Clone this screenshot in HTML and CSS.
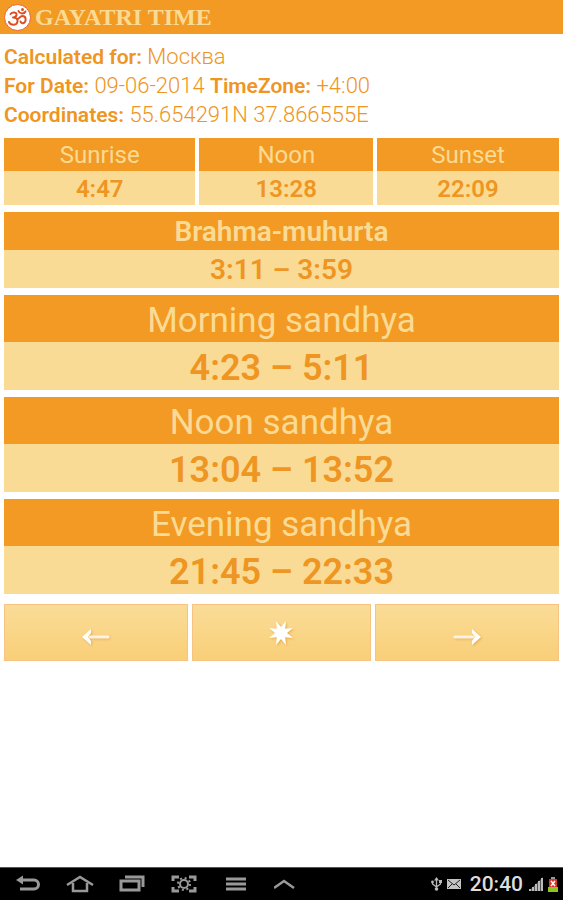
FILE: index.html
```html
<!DOCTYPE html>
<html lang="en">
<head>
    <meta charset="UTF-8">
    <meta name="viewport" content="width=device-width, initial-scale=1.0">
    <title>Gayatri Time</title>
    <link rel="stylesheet" href="styles.css">
</head>
<body>
    <header class="header">
        <svg class="logo" viewBox="0 0 54 54" aria-hidden="true">
            <circle cx="27" cy="27" r="26" fill="#fff" stroke="#e8622a" stroke-width="2"/>
            <g fill="none" stroke="#dc4f24" stroke-width="4" stroke-linecap="round" stroke-linejoin="round">
                <path d="M13 20c4-5 13-4 12 2-1 4-4 5-7 5 6 0 10 3 9 8-1 8-13 9-17 1"/>
                <path d="M26 30c5 1 5-6 11-6 7 0 8 9 4 13-3 3-7 1-8-2"/>
                <path d="M29 14c2 6 11 7 14 1"/>
            </g>
            <circle cx="37" cy="11" r="3" fill="#dc4f24"/>
        </svg>
        <h1>GAYATRI TIME</h1>
    </header>

    <main class="content">
        <div class="info">
            <p><strong>Calculated for:</strong> Москва</p>
            <p><strong>For Date:</strong> 09-06-2014 <strong>TimeZone:</strong> +4:00</p>
            <p><strong>Coordinates:</strong> 55.654291N 37.866555E</p>
        </div>

        <table class="sun-table">
            <thead>
                <tr>
                    <th scope="col">Sunrise</th>
                    <th scope="col">Noon</th>
                    <th scope="col">Sunset</th>
                </tr>
            </thead>
            <tbody>
                <tr>
                    <td>4:47</td>
                    <td>13:28</td>
                    <td>22:09</td>
                </tr>
            </tbody>
        </table>

        <section class="period period-small">
            <h2>Brahma-muhurta</h2>
            <p>3:11 – 3:59</p>
        </section>
        <section class="period">
            <h2>Morning sandhya</h2>
            <p>4:23 – 5:11</p>
        </section>
        <section class="period">
            <h2>Noon sandhya</h2>
            <p>13:04 – 13:52</p>
        </section>
        <section class="period">
            <h2>Evening sandhya</h2>
            <p>21:45 – 22:33</p>
        </section>

        <div class="day-buttons">
            <button type="button" aria-label="Previous day">
                <svg class="arrow" viewBox="0 0 28 18" aria-hidden="true">
                    <path d="M8 9h18" stroke="#fff" stroke-opacity="0.8" stroke-width="3" stroke-linecap="round"/>
                    <path d="M0 9L9 1v4L6 9l3 4v4z" fill="#fff"/>
                </svg>
            </button>
            <button type="button" aria-label="Today">
                <svg class="star" viewBox="0 0 28 28" aria-hidden="true">
                    <path d="M19 2l-.8 7.800L26 9l-6 5 6 5-7.800-.8L19 26l-5-6-5 6 .8-7.800L2 19l6-5-6-5 7.800.8L9 2l5 6z" fill="#fff"/>
                </svg>
            </button>
            <button type="button" aria-label="Next day">
                <svg class="arrow" viewBox="0 0 28 18" aria-hidden="true">
                    <path d="M2 9h18" stroke="#fff" stroke-opacity="0.8" stroke-width="3" stroke-linecap="round"/>
                    <path d="M28 9L19 1v4l3 4-3 4v4z" fill="#fff"/>
                </svg>
            </button>
        </div>
    </main>

    <footer class="system-bar">
        <nav class="system-nav">
            <button type="button" aria-label="Back">
                <svg viewBox="0 0 28 20" aria-hidden="true">
                    <path d="M6 6h14a4.500 4.500 0 0 1 0 9H6" fill="none" stroke="#999" stroke-width="3"/>
                    <path d="M2 6l7-4.500v9z" fill="#999"/>
                </svg>
            </button>
            <button type="button" aria-label="Home">
                <svg viewBox="0 0 28 20" aria-hidden="true">
                    <path d="M1 11L14 3l13 8M7 9v8h14V9" fill="none" stroke="#999" stroke-width="2.500"/>
                </svg>
            </button>
            <button type="button" aria-label="Recent apps">
                <svg viewBox="0 0 28 20" aria-hidden="true">
                    <path d="M3 7h18v9H3zM7 3h18v10" fill="none" stroke="#999" stroke-width="3"/>
                </svg>
            </button>
            <button type="button" aria-label="Screenshot">
                <svg viewBox="0 0 28 20" aria-hidden="true">
                    <path d="M3 7V3h6M19 3h6v4M25 13v4h-6M9 17H3v-4" fill="none" stroke="#999" stroke-width="3"/>
                    <circle cx="14" cy="10" r="4" fill="none" stroke="#999" stroke-width="2"/>
                    <circle cx="14" cy="10" r="6" fill="none" stroke="#999" stroke-width="2" stroke-dasharray="2 2.700"/>
                </svg>
            </button>
            <button type="button" aria-label="Menu">
                <svg viewBox="0 0 28 20" aria-hidden="true">
                    <path d="M4 5h20M4 10h20M4 15h20" stroke="#999" stroke-width="3"/>
                </svg>
            </button>
            <button type="button" aria-label="Expand">
                <svg viewBox="0 0 28 20" aria-hidden="true">
                    <path d="M0 14l10-7 10 7" fill="none" stroke="#999" stroke-width="2.500"/>
                </svg>
            </button>
        </nav>
        <div class="status">
            <svg width="11" height="14" viewBox="0 0 11 14" aria-hidden="true">
                <path d="M5.500 2v9M1.500 5v2l4 3 4-3V4" fill="none" stroke="#bbb" stroke-width="1.300"/>
                <path d="M5.500 0L8 3.500H3z" fill="#bbb"/>
                <circle cx="5.500" cy="12" r="1.800" fill="#bbb"/>
                <circle cx="1.500" cy="5" r="1.400" fill="#bbb"/>
                <path d="M8 3h3v3H8z" fill="#bbb"/>
            </svg>
            <svg width="14" height="10" viewBox="0 0 14 10" aria-hidden="true">
                <path d="M0 0h14v10H0z" fill="#c4c4c4"/>
                <path d="M1 1l6 5 6-5M1 9l4-4M13 9L9 5" fill="none" stroke="#222" stroke-width="1"/>
            </svg>
            <span class="clock">20:40</span>
            <svg width="14" height="14" viewBox="0 0 14 14" aria-hidden="true">
                <path d="M0 14L14 0v14z" fill="#555"/>
                <path d="M0 14v-2h2v2zM3 14V10h2v4zM6 14V7h2v7zM9 14V4h2v10zM12 14V1h2v13z" fill="#bbb"/>
            </svg>
            <svg width="10" height="15" viewBox="0 0 10 15" aria-hidden="true">
                <path d="M3 0h4v2H3z" fill="#999"/>
                <path d="M1 2h8v9H1z" fill="#d8352c"/>
                <path d="M0 10h10v5H0z" fill="#8fc31f"/>
                <path d="M3 4l4 5M7 4L3 9" stroke="#fff" stroke-width="1.500"/>
            </svg>
        </div>
    </footer>
</body>
</html>
```

FILE: styles.css
```css
* {
    box-sizing: border-box;
}

body {
    display: flex;
    flex-direction: column;
    min-height: 100vh;
    margin: 0;
    background-color: #fff;
    color: #ee9522;
    font-family: Roboto, sans-serif;
}

h1,
h2,
p {
    margin: 0;
}

.header {
    display: flex;
    align-items: center;
    gap: 4px;
    height: 34px;
    padding: 0 4px;
    background-color: #f29a23;
}

.logo {
    width: 27px;
    height: 27px;
}

h1 {
    color: #fadb95;
    font-family: "Liberation Serif", serif;
    font-size: 24px;
    line-height: 34px;
}

.content {
    padding: 8px 4px;
}

.info {
    margin-bottom: 9px;
    font-size: 22px;
    font-weight: 300;
    line-height: 29px;
}

.info strong {
    font-size: 21px;
    font-weight: 600;
    line-height: 1;
}

.sun-table {
    width: 100%;
    margin-bottom: 7px;
    border-collapse: separate;
    border-spacing: 0;
    table-layout: fixed;
    font-size: 24px;
    line-height: 32px;
    text-align: center;
}

.sun-table th,
.sun-table td {
    padding: 2px 0 0;
}

.sun-table th {
    background-color: #f29a23;
    color: #fadb95;
    font-weight: 400;
    line-height: 31px;
}

.sun-table th:first-child {
    width: 34.5%;
}

.sun-table th:nth-child(2) {
    width: 32%;
}

.sun-table td {
    background-color: #fadb95;
    font-weight: 600;
}

.sun-table th + th,
.sun-table td + td {
    border-left: 4px solid #fff;
}

.period {
    margin-bottom: 7px;
    background-color: #fadb95;
    font-size: 36px;
    line-height: 44px;
    text-align: center;
}

.period h2 {
    padding-top: 4px;
    background-color: #f29a23;
    color: #fadb95;
    font-size: 35px;
    font-weight: 400;
    line-height: 43px;
}

.period p {
    padding-top: 4px;
    font-weight: 600;
}

.period-small p,
.period-small h2 {
    padding-top: 2px;
    font-size: 28px;
    line-height: 36px;
}

.period-small h2 {
    font-weight: 600;
}

.day-buttons {
    display: grid;
    grid-template-columns: 34fr 33fr 34fr;
    gap: 4px;
    margin-top: 10px;
}

.day-buttons button {
    display: flex;
    align-items: center;
    justify-content: center;
    height: 57px;
    padding: 0;
    border: 1px solid #f6c383;
    background: linear-gradient(#fadc97, #f9cf78);
    cursor: pointer;
}

.day-buttons svg {
    filter: drop-shadow(1px 1px 1px #e9a94a);
}

.arrow {
    width: 28px;
    height: 18px;
    margin-top: 8px;
}

.star {
    width: 28px;
    height: 28px;
}

.system-bar {
    display: flex;
    align-items: center;
    justify-content: space-between;
    height: 33px;
    margin-top: auto;
    padding: 0 5px 0 14px;
    border-top: 1px solid #555;
    background-color: #000;
}

.system-nav {
    display: flex;
    gap: 24px;
}

.system-nav button {
    display: flex;
    padding: 0;
    border: 0;
    background: none;
}

.system-nav svg {
    width: 28px;
    height: 20px;
}

.status {
    display: flex;
    align-items: center;
    gap: 5px;
}

.clock {
    margin: 0 1px 0 4px;
    color: #ddd;
    font-size: 21px;
    font-weight: 500;
    line-height: 32px;
}
```
